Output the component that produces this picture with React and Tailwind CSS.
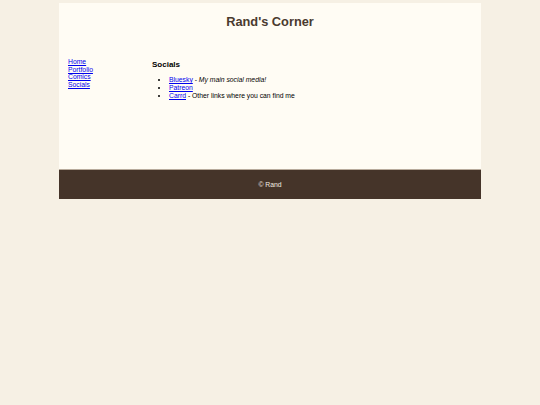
import React from 'react'

const navLinks = ['Home', 'Portfolio', 'Comics', 'Socials']

const App = () => {
    return (
        <div className="min-h-screen bg-[#f6f0e4] pt-[3px] text-[6.8px] leading-[1.13] text-black" style={{ fontFamily: '"Liberation Sans", Arial, sans-serif' }}>
            <div className="w-[422px] mx-auto bg-[#fffcf4]">
                <header className="h-[32px] pt-[11.6px]">
                    <h1 className="text-center text-[12.8px] font-bold leading-[1.15] text-[#4a3a2e]">Rand's Corner</h1>
                </header>

                <div className="flex h-[134px] pt-[23px] pl-[9px]">
                    <nav className="w-[84px] flex flex-col">
                        {navLinks.map((link) => (
                            <a key={link} href="#" className="text-[#0000ee] underline">{link}</a>
                        ))}
                    </nav>

                    <main className="pt-[2px]">
                        <h3 className="text-[8px] font-bold leading-[1.15]">Socials</h3>
                        <ul className="list-disc pl-[17px] mt-[7px]">
                            <li><a href="#" className="text-[#0000ee] underline">Bluesky</a> - <em>My main social media!</em></li>
                            <li><a href="#" className="text-[#0000ee] underline">Patreon</a></li>
                            <li><a href="#" className="text-[#0000ee] underline">Carrd</a> - Other links where you can find me</li>
                        </ul>
                    </main>
                </div>

                <footer className="h-[30px] bg-[#453429] border-t border-[#b8ab9c] flex items-center justify-center text-[#f3ece0]">
                    <p>© Rand</p>
                </footer>
            </div>
        </div>
    )
}

export default App
